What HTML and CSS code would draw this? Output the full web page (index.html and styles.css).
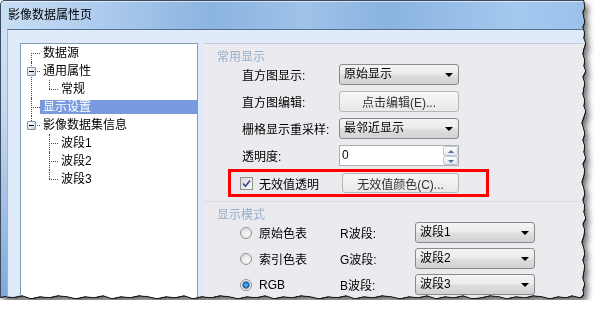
FILE: index.html
```html
<!DOCTYPE html>
<html lang="zh-CN">
<head>
    <meta charset="UTF-8">
    <meta name="viewport" content="width=device-width, initial-scale=1.0">
    <title>影像数据属性页</title>
    <link rel="stylesheet" href="styles.css">
</head>
<body>
    <div class="sheet">
        <div class="window">
            <div class="titlebar">影像数据属性页</div>
            <div class="frame">
                <div class="client">
                    <div class="tree-panel">
                        <ul class="tree">
                            <li><span class="label">数据源</span></li>
                            <li>
                                <span class="toggle"></span>
                                <span class="label">通用属性</span>
                                <ul>
                                    <li><span class="label">常规</span></li>
                                </ul>
                            </li>
                            <li><span class="label selected">显示设置</span></li>
                            <li>
                                <span class="toggle"></span>
                                <span class="label">影像数据集信息</span>
                                <ul>
                                    <li><span class="label">波段1</span></li>
                                    <li><span class="label">波段2</span></li>
                                    <li><span class="label">波段3</span></li>
                                </ul>
                            </li>
                        </ul>
                    </div>

                    <div class="page">
                        <div class="group">
                            <div class="group-title">常用显示</div>
                            <div class="field">
                                <span class="field-label">直方图显示:</span>
                                <div class="combo">原始显示</div>
                            </div>
                            <div class="field">
                                <span class="field-label">直方图编辑:</span>
                                <button class="btn">点击编辑(E)...</button>
                            </div>
                            <div class="field">
                                <span class="field-label">栅格显示重采样:</span>
                                <div class="combo">最邻近显示</div>
                            </div>
                            <div class="field">
                                <span class="field-label">透明度:</span>
                                <div class="spin">
                                    <span class="spin-value">0</span>
                                    <span class="spin-btns">
                                        <span class="spin-btn up"></span>
                                        <span class="spin-btn down"></span>
                                    </span>
                                </div>
                            </div>
                            <div class="mark-row">
                                <label class="check-label">
                                    <span class="checkbox">
                                        <svg width="11" height="11" viewBox="0 0 11 11"><path d="M2 5.5 L4.5 8.2 L9 2.5" fill="none" stroke="#3d4d8e" stroke-width="1.7"/></svg>
                                    </span>
                                    无效值透明
                                </label>
                                <button class="btn btn-color">无效值颜色(C)...</button>
                            </div>
                        </div>

                        <div class="group">
                            <div class="group-title">显示模式</div>
                            <div class="mode-row">
                                <label class="radio-label"><span class="radio"></span>原始色表</label>
                                <span class="band-label">R波段:</span>
                                <div class="combo">波段1</div>
                            </div>
                            <div class="mode-row">
                                <label class="radio-label"><span class="radio"></span>索引色表</label>
                                <span class="band-label">G波段:</span>
                                <div class="combo">波段2</div>
                            </div>
                            <div class="mode-row">
                                <label class="radio-label"><span class="radio on"></span>RGB</label>
                                <span class="band-label">B波段:</span>
                                <div class="combo">波段3</div>
                            </div>
                        </div>
                    </div>
                </div>
            </div>
        </div>
    </div>
</body>
</html>
```

FILE: styles.css
```css
body {
    margin: 0;
    background: #fff;
    font-family: "Liberation Sans", "Noto Sans CJK SC", sans-serif;
    font-size: 12px;
    color: #000;
}
.sheet {
    width: 586px;
    height: 300px;
    filter: drop-shadow(1px 0 0 #1e1e1e) drop-shadow(0 1px 0 #1e1e1e) drop-shadow(3px 4px 3px rgba(0, 0, 0, .6));
}
.window {
    display: flex;
    flex-direction: column;
    width: 586px;
    height: 300px;
    box-sizing: border-box;
    border-left: 1px solid #3b4a5e;
    border-top: 1px solid #3b4a5e;
    border-top-left-radius: 5px;
    overflow: hidden;
    background: linear-gradient(#d4e4f6, #c2d7ef 40%, #7fa8d8);
    clip-path: polygon(0 0, 583px 0, 584px 8px, 582px 12px, 583px 17px, 584px 22px, 582px 27px, 584px 33px, 583px 38px, 585px 43px, 583px 49px, 582px 54px, 584px 60px, 583px 66px, 585px 71px, 582px 77px, 584px 83px, 583px 88px, 582px 94px, 584px 100px, 583px 106px, 585px 111px, 583px 117px, 581px 123px, 583px 129px, 584px 134px, 582px 140px, 584px 146px, 583px 152px, 585px 158px, 582px 164px, 584px 170px, 583px 176px, 581px 182px, 583px 188px, 584px 194px, 582px 200px, 584px 206px, 583px 212px, 585px 218px, 582px 224px, 584px 230px, 583px 236px, 581px 242px, 583px 248px, 584px 254px, 582px 260px, 584px 266px, 583px 272px, 582px 278px, 584px 284px, 582px 290px, 583px 294px, 580px 297px, 572px 295px, 566px 297px, 558px 296px, 550px 298px, 542px 296px, 533px 295px, 525px 297px, 516px 296px, 507px 298px, 499px 296px, 490px 295px, 481px 297px, 472px 298px, 463px 295px, 454px 297px, 445px 296px, 436px 298px, 427px 295px, 418px 297px, 409px 296px, 400px 298px, 391px 296px, 382px 295px, 373px 297px, 364px 296px, 355px 298px, 346px 295px, 337px 297px, 328px 296px, 319px 298px, 310px 296px, 301px 295px, 292px 297px, 283px 296px, 274px 298px, 265px 295px, 256px 297px, 247px 296px, 238px 298px, 229px 296px, 220px 295px, 211px 297px, 202px 296px, 193px 298px, 184px 295px, 175px 297px, 166px 296px, 157px 298px, 148px 296px, 139px 295px, 130px 297px, 121px 296px, 112px 298px, 103px 295px, 94px 297px, 85px 296px, 76px 298px, 67px 296px, 58px 295px, 49px 297px, 40px 296px, 31px 298px, 22px 295px, 13px 297px, 5px 296px, 0 297px);
}
.titlebar {
    flex: none;
    height: 28px;
    padding-left: 7px;
    line-height: 28px;
    box-shadow: inset 0 1px rgba(255, 255, 255, .6);
    background: linear-gradient(90deg, #c8def4 0%, #abcaed 18%, #8bb4e0 36%, #9fc2e9 52%, #8ab3e1 66%, #a4c9ef 88%, #9bc1eb 100%);
}
.frame {
    flex: 1;
    display: flex;
    min-height: 0;
    padding-left: 6px;
}
.client {
    flex: 1;
    display: flex;
    gap: 6px;
    padding: 13px 0 0 12px;
    border-top: 1px solid #56708f;
    border-left: 1px solid #a3b7cf;
    background: #dfeafb;
}
.tree-panel {
    flex: none;
    width: 178px;
    box-sizing: border-box;
    margin-bottom: -20px;
    border: 1px solid #7f9db9;
    background: #fff;
}
.tree, .tree ul {
    list-style: none;
    margin: 0;
    padding: 0;
}
.tree {
    padding-left: 1px;
}
.tree li {
    position: relative;
    display: flex;
    flex-direction: column;
    padding-left: 18px;
}
.tree li::before {
    content: '';
    position: absolute;
    left: 9px;
    top: 9px;
    width: 9px;
    border-top: 1px dotted #4a4a4a;
}
.tree li::after {
    content: '';
    position: absolute;
    left: 9px;
    top: 0;
    bottom: 0;
    border-left: 1px dotted #4a4a4a;
}
.tree > li:first-child::after {
    top: 9px;
}
.tree li:last-child::after {
    bottom: auto;
    height: 9px;
}
.tree .label {
    display: block;
    height: 14px;
    margin: 2px 0;
    padding: 0 3px;
    line-height: 14px;
    white-space: nowrap;
}
.tree .selected {
    background: #7a9ae0;
    color: #fff;
}
.toggle {
    position: absolute;
    z-index: 1;
    left: 5px;
    top: 5px;
    width: 9px;
    height: 9px;
    box-sizing: border-box;
    border: 1px solid #7b93ae;
    border-radius: 1px;
    background: linear-gradient(135deg, #fff, #c6d2df);
}
.toggle::after {
    content: '';
    position: absolute;
    left: 1px;
    top: 3px;
    width: 5px;
    height: 1px;
    background: #000;
}
.page {
    flex: 1;
    margin-bottom: -20px;
    border-top: 1px solid #c5cdd8;
    background: #ebebef;
}
.group {
    padding-bottom: 4px;
}
.group + .group {
    border-top: 1px solid #d5dce6;
}
.group-title {
    padding: 6px 0 0 13px;
    line-height: 14px;
    color: #98aecb;
}
.field {
    display: flex;
    align-items: center;
    height: 21px;
    padding-left: 38px;
}
.field + .field {
    margin-top: 6px;
}
.field-label {
    width: 97px;
}
.combo {
    position: relative;
    width: 120px;
    height: 21px;
    box-sizing: border-box;
    padding-left: 4px;
    border: 1px solid #8a8a8a;
    border-radius: 3px;
    line-height: 19px;
    background: linear-gradient(#f4f4f4, #ececec 45%, #dedede 55%, #d2d2d2);
}
.combo::after {
    content: '';
    position: absolute;
    right: 5px;
    top: 8px;
    border-left: 4px solid transparent;
    border-right: 4px solid transparent;
    border-top: 4px solid #000;
}
.btn {
    width: 120px;
    height: 21px;
    padding: 0;
    border: 1px solid #b6b6b6;
    border-radius: 3px;
    background: linear-gradient(#f6f6f6, #e9e9e9);
    font: inherit;
    color: #333;
}
.spin {
    display: flex;
    width: 120px;
    height: 21px;
    box-sizing: border-box;
    border: 1px solid #abadb3;
    background: #fff;
}
.spin-value {
    flex: 1;
    padding-left: 2px;
    line-height: 19px;
}
.spin-btns {
    display: flex;
    flex-direction: column;
    width: 15px;
}
.spin-btn {
    position: relative;
    flex: 1;
    border: 1px solid #c3c7d1;
    border-radius: 2px;
    background: linear-gradient(#fdfdfd, #e3e6ed);
}
.spin-btn::after {
    content: '';
    position: absolute;
    left: 4px;
    top: 3px;
    border-left: 3px solid transparent;
    border-right: 3px solid transparent;
}
.spin-btn.up::after {
    border-bottom: 3px solid #5470b0;
}
.spin-btn.down::after {
    border-top: 3px solid #5470b0;
}
.mark-row {
    display: flex;
    align-items: center;
    width: 261px;
    height: 28px;
    box-sizing: border-box;
    margin: 3px 0 0 24px;
    padding-left: 9px;
    border: 3px solid #f00;
}
.check-label {
    display: flex;
    align-items: center;
    gap: 6px;
    width: 102px;
}
.checkbox {
    display: flex;
    align-items: center;
    justify-content: center;
    width: 13px;
    height: 13px;
    box-sizing: border-box;
    border: 1px solid #8e8f8f;
    background: linear-gradient(135deg, #d9d9d9, #fbfbfb);
}
.btn-color {
    width: 117px;
    height: 20px;
}
.mode-row {
    display: flex;
    align-items: center;
    height: 21px;
    padding-left: 36px;
}
.mode-row + .mode-row {
    margin-top: 5px;
}
.radio-label {
    display: flex;
    align-items: center;
    gap: 7px;
    width: 100px;
}
.band-label {
    width: 75px;
}
.radio {
    width: 12px;
    height: 12px;
    box-sizing: border-box;
    border: 1px solid #929292;
    border-radius: 50%;
    background: radial-gradient(circle at 60% 65%, #fbfbfb, #d3d3d3);
}
.radio.on {
    background: radial-gradient(circle, #6cc3f5 0, #2d86d6 2px, #1b5aa6 3px, #7d93ad 3.6px, #f3f3f3 4.2px, #d6d6d6);
}
```
